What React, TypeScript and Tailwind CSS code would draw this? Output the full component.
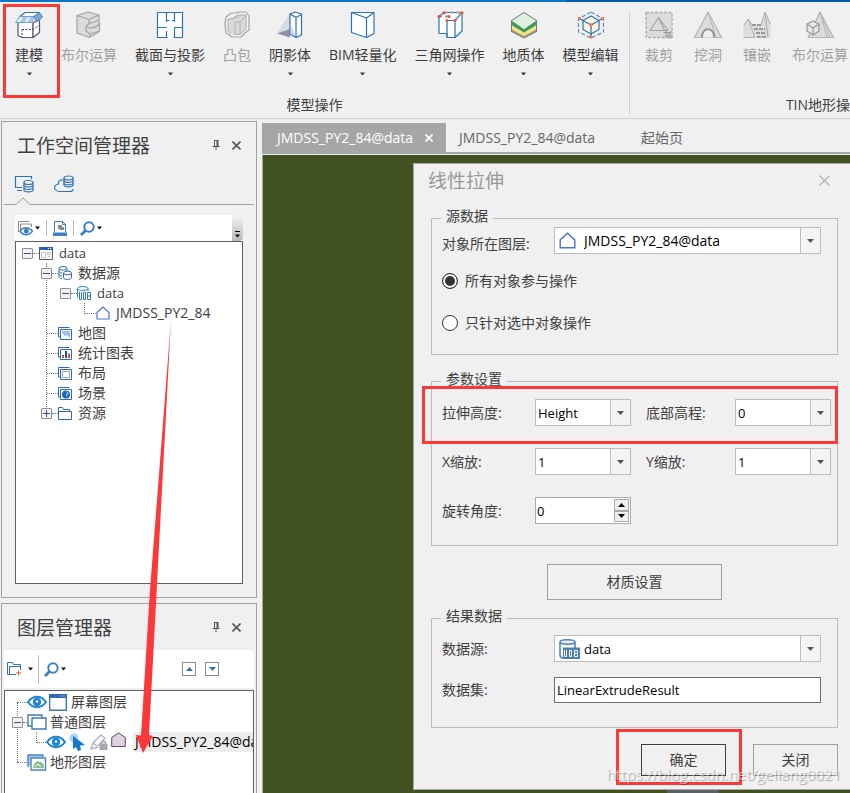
import type { ReactNode } from 'react';
import { clsx } from 'clsx';

const BLUE = '#2f73b5';
const GREY = '#a3a3a3';

/* ---------- Ribbon icons ---------- */

function Icon28({ children }: { children: ReactNode }) {
  return (
    <svg width="28" height="28" viewBox="0 0 28 28" fill="none" strokeLinejoin="round" aria-hidden="true">
      {children}
    </svg>
  );
}

const ModelIcon = () => (
  <Icon28>
    <path d="M3 11v13.500l4 2h11V12" fill="#fff" stroke="#555a6e" strokeWidth="1.200" />
    <path d="M18 26.500l6.500-5V8L18 12z" fill="#fff" stroke="#555a6e" strokeWidth="1.200" />
    <path d="M7 18.500h11l6-4M7 18.500v8" stroke="#3d4a66" strokeDasharray="2 1.500" />
    <path d="M10 1.500h14.500l-5 4H5z" fill="#fff" stroke="#2f6fae" strokeWidth="1.200" />
    <path d="M5 5.500h14l-2 6H.5z" fill="#e6f0fa" stroke="#6f9fd0" />
    <path d="M8 6h4l-2 5H5zM15 6h3l-1.500 5H13z" fill="#a9c8ea" />
    <path d="M24.500 1.500l3 4.500-5.500 5-3-5.500z" fill="#7fa7d6" stroke="#4d84bd" />
  </Icon28>
);

const BooleanIcon = () => (
  <Icon28>
    <path d="M2 4.500L13 1l11 3v5.500l.5 3v8l-10 6L2 22z" fill="#dcdcdc" stroke={GREY} strokeWidth="1.200" />
    <path d="M2 4.500l12 4L24 4M14 8.500v4M14.500 12.500L23 9.500M11 15c2 3 9 3 13.500-2.500M11 15l3.500-2.500M11 15v5l4 3 9.500-3M15 23v3" stroke={GREY} strokeWidth="1.200" />
  </Icon28>
);

const SectionIcon = () => (
  <Icon28>
    <path d="M1.500 1.500h25v25h-25z" fill="#fff" stroke={BLUE} strokeWidth="1.200" />
    <path d="M10.500 2v9M18.500 2v9M10.500 9.500h3M16 9.500h2.500M2 16.500h8.500M10.500 20v6M18.500 16.500v10M18.500 16.500h8" stroke={BLUE} strokeWidth="1.200" />
    <path d="M11.500 26.500h6" stroke="#fff" strokeWidth="2" />
  </Icon28>
);

const HullIcon = () => (
  <Icon28>
    <path d="M3 6l5-4h5l3-1h7l3 4v14l-4 3-4 4H9l-6-4-1-9z" fill="#f2f2f2" stroke={GREY} strokeWidth="1.200" />
    <path d="M5 8l6-3 12-2v15l-7 6H9l-4-3z" fill="#d9d9d9" />
    <path d="M5 8h5l4-4h9v14l-6 5.500V11h-5v12.500h5M5 8v12.500l3 2.500M17 11l6-6M10 8l6-3" stroke="#b0b0b0" />
  </Icon28>
);

const ShadowIcon = () => (
  <Icon28>
    <path d="M14 2L1 22.500h13z" fill="#d6dae2" />
    <path d="M1 22.500L14 18v8.500z" fill="#8d93a3" />
    <path d="M14 3l5-2 6.500 2v21L20 26.500 14 23z" fill="#fff" stroke="#2f6fae" strokeWidth="1.200" />
    <path d="M14 3l6 3.500 5.500-3M20 6.500v20" stroke="#2f6fae" strokeWidth="1.200" />
    <path d="M14.600 13l5 12.500-5-3z" fill="#c9d9ee" />
  </Icon28>
);

const BimIcon = () => (
  <Icon28>
    <path d="M2.500 1.500h22.500v21L17.500 26.500l-15-5z" fill="#fff" stroke={BLUE} strokeWidth="1.200" />
    <path d="M2.500 1.500l15 5.500L25 1.500M17.500 7v19.500" stroke={BLUE} strokeWidth="1.200" />
  </Icon28>
);

const MeshIcon = () => (
  <Icon28>
    <path d="M3 5.500v17h8v4h8l7-6.500V1.500H8z" fill="#fff" stroke={BLUE} strokeWidth="1.200" />
    <path d="M11 26V9.500h8v17M19 9.500l7-8" stroke={BLUE} strokeWidth="1.200" />
    <path d="M8 1.500h18l-7 8M3 5.500h10" stroke="#9aa0a8" strokeWidth="2" strokeDasharray="3 3" />
    <g fill="#e2593a">
      <circle cx="8" cy="1.800" r="1.600" />
      <circle cx="26" cy="1.800" r="1.600" />
      <circle cx="3" cy="5.500" r="1.600" />
      <circle cx="13" cy="5.500" r="1.600" />
      <circle cx="11" cy="9.500" r="1.600" />
      <circle cx="19" cy="9.500" r="1.600" />
    </g>
  </Icon28>
);

const GeologyIcon = () => (
  <Icon28>
    <path d="M1.500 17v3.500L14 27l12.500-6.500V17L14 24z" fill="#b0a070" />
    <path d="M1.500 13.500V18L14 25l12.500-7v-4.500L14 20z" fill="#f2e487" />
    <path d="M1.500 9.500V14L14 21.500 26.500 14V9.500L14 18z" fill="#3f9b5c" />
    <path d="M14 1.500l12.500 8L14 18 1.500 9.500z" fill="#dff0df" />
    <path d="M14 1.500l12.500 8v11L14 27 1.500 20.500v-11z" stroke="#6b7a80" />
  </Icon28>
);

const EditIcon = () => (
  <Icon28>
    <path d="M14 1l12.500 7v13L14 27 1.500 21V8z" stroke="#5b8dc0" strokeDasharray="4 2" strokeWidth="1.200" />
    <path d="M14 5l8 4.500v9L14 23l-8-4.500v-9z" fill="#faf5dc" stroke={BLUE} strokeWidth="1.200" />
    <path d="M2.500 7.500L14 14l11.500-6.500M14 14v12" stroke={BLUE} strokeWidth="1.200" />
    <path d="M1.500 6.500h2v2h-2zM24.500 6.500h2v2h-2zM13 13h2v2h-2zM13 25h2v2h-2z" fill="#fff" stroke="#e2593a" />
  </Icon28>
);

const ClipIcon = () => (
  <Icon28>
    <path d="M1 1.500h26v25H1z" fill="#dcdcdc" stroke="#adadad" strokeWidth="1.300" strokeDasharray="3 1.500" />
    <path d="M13.500 6.500L5 19.500h18zM13.500 6.500l6 13" stroke={GREY} strokeWidth="1.200" />
    <path d="M21 19v6h7M18.500 21.500h6.500V28M20 26.500l7-7" stroke="#999" />
  </Icon28>
);

const DigIcon = () => (
  <Icon28>
    <path d="M14 1L.5 26.500h27z" fill="#dcdcdc" stroke="#b4b4b4" strokeWidth="1.200" />
    <path d="M14 1l8 25.500" stroke="#b4b4b4" />
    <path d="M8 26.500c-1-11 13-11 12 0" stroke="#979797" strokeWidth="2" fill="#efefef" />
  </Icon28>
);

const InlayIcon = () => (
  <Icon28>
    <path d="M.5 26.500V15L5 8l4.500 6H18l4-13 5.500 13v12.500z" fill="#dcdcdc" />
    <path d="M.5 15L5 8l7 18.500M5 8l4.500 6M18 14l4-13 5.500 12M22 1l3 25.500M.5 26.500h11" stroke="#adadad" />
    <path d="M9 14h10M11 18h11M13 22h10M14 26h10" stroke="#9a9a9a" strokeWidth="2" strokeDasharray="4 1" />
  </Icon28>
);

const TinBooleanIcon = () => (
  <Icon28>
    <path d="M14 1L2 26.500h25.500z" fill="#dcdcdc" stroke="#b4b4b4" strokeWidth="1.200" />
    <path d="M14 1l7 25.500M14 1l10 25.500" stroke="#b4b4b4" />
    <path d="M7 10l6 3v7l-6 4-6-4v-7z" fill="#e6e6e6" stroke="#979797" strokeWidth="1.200" />
    <path d="M1 13l6 4 6-4M7 17v7" stroke="#979797" strokeWidth="1.200" />
  </Icon28>
);

/* ---------- Small icons ---------- */

function Caret({ className }: { className?: string }) {
  return (
    <svg className={className} width="7" height="4" viewBox="0 0 7 4" fill="currentColor" aria-hidden="true">
      <path d="M0 0h7L3.500 4z" />
    </svg>
  );
}

const PinIcon = () => (
  <svg width="8" height="10" viewBox="0 0 8 10" fill="none" stroke="#555" aria-hidden="true">
    <path d="M2.500 0v6M2 .5h4M.5 6.500h7M4 7v3" />
    <path d="M5.500 0v6" strokeWidth="2" />
  </svg>
);

const CloseIcon = ({ size = 9, width = 1.6 }: { size?: number; width?: number }) => (
  <svg width={size} height={size} viewBox="0 0 9 9" stroke="currentColor" strokeWidth={width} aria-hidden="true">
    <path d="M.5.5l8 8M8.500.5l-8 8" />
  </svg>
);

const SearchIcon = () => (
  <svg width="15" height="15" viewBox="0 0 15 15" fill="none" stroke="#3f7fc0" aria-hidden="true">
    <circle cx="9" cy="6" r="4.700" strokeWidth="2" />
    <path d="M5.500 9.500L1 14" strokeWidth="2.800" />
  </svg>
);

const EyeIcon = () => (
  <svg className="shrink-0" width="20" height="14" viewBox="0 0 20 14" aria-hidden="true">
    <path d="M1 7c5-7 13-7 18 0-5 7-13 7-18 0z" fill="#fff" stroke="#1b82d1" strokeWidth="2" />
    <circle cx="10" cy="7" r="4.200" fill="#1b82d1" />
    <circle cx="10" cy="6.500" r="1.300" fill="#fff" />
  </svg>
);

const LocalTabIcon = () => (
  <svg width="20" height="18" viewBox="0 0 20 18" fill="none" stroke={BLUE} strokeWidth="1.200" aria-hidden="true">
    <path d="M8 12.500H1.500v-11h16V4M3 15.500h5" />
    <path d="M10 7.500v7.500c0 2.500 9 2.500 9 0V7.500" fill="#f0f0f0" />
    <ellipse cx="14.500" cy="7.500" rx="4.500" ry="2" fill="#f0f0f0" />
    <path d="M10 10c0 2.500 9 2.500 9 0M10 12.500c0 2.500 9 2.500 9 0" />
  </svg>
);

const CloudTabIcon = () => (
  <svg width="20" height="18" viewBox="0 0 20 18" fill="none" stroke={BLUE} strokeWidth="1.200" aria-hidden="true">
    <path d="M9 5C6 4 4 7 4.500 9 1 9.500 0 12 1 14c1 1.500 2 2.500 4 2.500h11c2 0 3-1 3-2.500" />
    <path d="M10 3v7c0 2.500 9 2.500 9 0V3" fill="#f0f0f0" />
    <ellipse cx="14.500" cy="3" rx="4.500" ry="2" fill="#f0f0f0" />
    <path d="M10 5.500C10 8 19 8 19 5.500M10 8c0 2.500 9 2.500 9 0" />
  </svg>
);

const LayersEyeIcon = () => (
  <svg width="15" height="15" viewBox="0 0 15 15" fill="none" aria-hidden="true">
    <path d="M.5 11V.5h11M2.500 9V3h11v3" stroke="#8a8a8a" />
    <path d="M2 10c3-4.500 9-4.500 12.500 0-3.500 5-9.500 5-12.500 0z" fill="#fff" stroke="#3f7fc0" strokeWidth="1.500" />
    <circle cx="8.300" cy="10" r="2.500" fill="#3f7fc0" />
  </svg>
);

const StyleIcon = () => (
  <svg width="14" height="15" viewBox="0 0 14 15" fill="none" aria-hidden="true">
    <path d="M1.500 11V.5h8l3 3V11M9.500.5v3h3" stroke="#3f7fc0" />
    <path d="M5 4h4v2h2v3H7V8H5z" fill="#888" />
    <path d="M0 11.500h14V15H0z" fill="#3f7fc0" />
  </svg>
);

const WindowIcon = () => (
  <svg width="14" height="13" viewBox="0 0 14 13" fill="none" aria-hidden="true">
    <path d="M.5.5h13v12H.5z" fill="#fff" stroke="#4b5a78" />
    <path d="M0 0h14v3H0z" fill="#2f5fc8" />
    <path d="M9 1.500h1M11 1.500h1" stroke="#fff" />
    <path d="M2.500 5.500h4v5h-4zM8.500 5.500h3v2h-3zM8.500 9.500h3" stroke="#c3c3c3" />
  </svg>
);

const SourcesIcon = () => (
  <svg width="14" height="14" viewBox="0 0 14 14" fill="none" stroke="#3172bd" aria-hidden="true">
    <path d="M1 2.500v8c0 1 1 2 3 2M1 5c0 1 1 2 3 2M1 8c0 1 1 2 3 2M9 2.500V5" />
    <ellipse cx="5" cy="2.300" rx="4" ry="1.800" />
    <path d="M5.500 7v4.500c0 2.500 8 2.500 8 0V7" fill="#fff" stroke="#2f5fd0" />
    <ellipse cx="9.500" cy="7" rx="4" ry="1.800" fill="#fff" stroke="#2f5fd0" />
  </svg>
);

const UdbIcon = () => (
  <svg width="14" height="15" viewBox="0 0 14 15" fill="none" stroke="#2b7fc0" aria-hidden="true">
    <path d="M.5 2.500v9M11 2.500V5" />
    <ellipse cx="5.700" cy="2.500" rx="5.200" ry="2" />
    <path d="M2.500 6v7.500h2V6M6.500 6.500h2v7h-2zM10.500 6.500h3v7h-3zM10.500 10h3" />
  </svg>
);

const RegionIcon = ({ size = 14 }: { size?: number }) => (
  <svg className="shrink-0" width={size} height={size} viewBox="0 0 14 14" fill="none" aria-hidden="true">
    <path d="M1 6.500L7 1l6 5.500V13H1z" fill="#fff" stroke="#4a78d2" strokeWidth="1.200" />
  </svg>
);

function StackIcon({ children }: { children?: ReactNode }) {
  return (
    <svg width="14" height="13" viewBox="0 0 14 13" fill="none" aria-hidden="true">
      <path d="M.5 10V.5h11M.5 10h2" stroke="#2f68c0" />
      <path d="M2.500 2.500h11v10h-11z" fill="#fff" stroke="#2f68c0" />
      {children}
    </svg>
  );
}

const FolderIcon = () => (
  <svg width="14" height="13" viewBox="0 0 14 13" fill="none" stroke="#2f68c0" aria-hidden="true">
    <path d="M.5 12.500V.5h4l1 2h6v2M.5 12.500h13v-8h-13" />
  </svg>
);

const BigUdbIcon = () => (
  <svg width="21" height="20" viewBox="0 0 21 20" fill="none" stroke="#4b7fb5" strokeWidth="1.500" aria-hidden="true">
    <path d="M1 3v13c0 2 1 3 3 3M16 3v6" />
    <ellipse cx="8.500" cy="3" rx="7.500" ry="2.200" fill="#e4eef8" />
    <path d="M4 8.500h17V20H4z" fill="#4b7fb5" stroke="none" />
    <path d="M5.500 11v6.500h2V11M10.500 11.500h2v6h-2zM15.500 11.500h3v6h-3zM15.500 14.500h3" stroke="#fff" strokeWidth="1" />
  </svg>
);

/* ---------- Ribbon ---------- */

type Tool = { label: string; icon: ReactNode; menu?: boolean; disabled?: boolean };

const modelTools: Tool[] = [
  { label: '建模', icon: <ModelIcon />, menu: true },
  { label: '布尔运算', icon: <BooleanIcon />, disabled: true },
  { label: '截面与投影', icon: <SectionIcon />, menu: true },
  { label: '凸包', icon: <HullIcon />, disabled: true },
  { label: '阴影体', icon: <ShadowIcon />, menu: true },
  { label: 'BIM轻量化', icon: <BimIcon />, menu: true },
  { label: '三角网操作', icon: <MeshIcon />, menu: true },
  { label: '地质体', icon: <GeologyIcon />, menu: true },
  { label: '模型编辑', icon: <EditIcon />, menu: true },
];

const tinTools: Tool[] = [
  { label: '裁剪', icon: <ClipIcon />, disabled: true },
  { label: '挖洞', icon: <DigIcon />, disabled: true },
  { label: '镶嵌', icon: <InlayIcon />, disabled: true },
  { label: '布尔运算', icon: <TinBooleanIcon />, disabled: true },
];

function ToolButton({ tool }: { tool: Tool }) {
  return (
    <button
      type="button"
      disabled={tool.disabled}
      className={clsx('flex shrink-0 flex-col items-center whitespace-nowrap', tool.disabled ? 'text-[#a0a0a0]' : 'text-[#3c3c3c]')}
    >
      {tool.icon}
      <span className="mt-[6px] leading-5">{tool.label}</span>
      <span className="mt-[7px] h-1">{tool.menu && <Caret className="w-[5px] text-[#333]" />}</span>
    </button>
  );
}

function Ribbon() {
  return (
    <header className="border-b border-[#d0d0d0]">
      <div className="flex h-[2px]">
        <div className="w-[567px] bg-[#0a74c8]" />
        <div className="flex-1 bg-[#00599f]" />
      </div>
      <div className="flex h-[116px] overflow-hidden pt-[9px]">
        <section className="flex w-[629px] shrink-0 flex-col">
          <div className="flex gap-[18px] pl-[15px]">
            {modelTools.map(t => <ToolButton key={t.label} tool={t} />)}
          </div>
          <h2 className="mt-[19px] text-center leading-5">模型操作</h2>
        </section>
        <div className="h-[103px] w-px shrink-0 bg-[#cfcfcf]" />
        <section className="flex w-[390px] shrink-0 flex-col">
          <div className="flex gap-[21px] pl-[15px]">
            {tinTools.map(t => <ToolButton key={t.label} tool={t} />)}
          </div>
          <h2 className="mt-[19px] text-center leading-5">TIN地形操作</h2>
        </section>
      </div>
    </header>
  );
}

/* ---------- Docked panels ---------- */

function PanelTitle({ children }: { children: ReactNode }) {
  return (
    <div className="flex h-[46px] shrink-0 items-center px-[15px]">
      <h2 className="flex-1 pt-[2px] text-[19px]">{children}</h2>
      <button type="button" aria-label="固定" className="mr-3"><PinIcon /></button>
      <button type="button" aria-label="关闭" className="text-[#555]"><CloseIcon /></button>
    </div>
  );
}

function Expander({ open }: { open: boolean }) {
  return (
    <button type="button" aria-label={open ? '折叠' : '展开'} className="z-10 flex size-[11px] shrink-0 items-center justify-center rounded-[1px] border border-[#909090] bg-[#f4f4f4]">
      <svg width="7" height="7" viewBox="0 0 7 7" stroke="#34508f" aria-hidden="true">
        <path d={open ? 'M0 3.500h7' : 'M0 3.500h7M3.500 0v7'} />
      </svg>
    </button>
  );
}

const Dots = ({ className }: { className: string }) => (
  <span className={clsx('shrink-0 border-t border-dotted border-[#777]', className)} />
);

function TreeRow({ className, children }: { className?: string; children: ReactNode }) {
  return <li className={clsx('flex h-5 items-center whitespace-nowrap', className)}>{children}</li>;
}

const leafNodes = [
  {
    label: '地图',
    icon: <StackIcon><path d="M4 4h8v7L9 8 7 9 4 6z" fill="#9cc0ea" /></StackIcon>,
  },
  {
    label: '统计图表',
    icon: <StackIcon><path d="M5 8v3M11 6.500V11" stroke="#c05a2a" strokeWidth="2" /><path d="M8 4v7" stroke="#1d4f9c" strokeWidth="2" /></StackIcon>,
  },
  {
    label: '布局',
    icon: <StackIcon><path d="M4.500 4.500h7v6h-7z" stroke="#555" strokeDasharray="1 1" /></StackIcon>,
  },
  {
    label: '场景',
    icon: <StackIcon><circle cx="8" cy="7.500" r="4" fill="#1c64b4" /><path d="M8 4.500l2.500 2-2 1 .5 2" stroke="#bfe0f5" /></StackIcon>,
  },
];

function WorkspacePanel() {
  return (
    <section className="flex h-[477px] shrink-0 flex-col border border-[#a0a0a0]">
      <PanelTitle>工作空间管理器</PanelTitle>
      <div className="flex gap-5 pt-[7px] pl-3">
        <button type="button" aria-label="本地"><LocalTabIcon /></button>
        <button type="button" aria-label="云端"><CloudTabIcon /></button>
      </div>
      <div className="mx-[2px] mt-1 flex items-end">
        <span className="w-3 border-b border-[#a0a0a0]" />
        <svg width="14" height="8" viewBox="0 0 14 8" fill="none" stroke="#a0a0a0" aria-hidden="true">
          <path d="M0 7.500L7 1l7 6.500" />
        </svg>
        <span className="flex-1 border-b border-[#a0a0a0]" />
      </div>
      <div className="mx-[13px] mt-[10px] flex h-[26px] items-center rounded-t-sm bg-white pl-[3px]">
        <button type="button" aria-label="显示" className="flex items-center gap-[2px]"><LayersEyeIcon /><Caret className="w-[5px] text-black" /></button>
        <span className="mx-[6px] h-4 w-px bg-[#b8b8b8]" />
        <button type="button" aria-label="样式"><StyleIcon /></button>
        <span className="mx-[6px] h-4 w-px bg-[#b8b8b8]" />
        <button type="button" aria-label="搜索" className="flex items-center gap-[2px]"><SearchIcon /><Caret className="w-[5px] text-black" /></button>
        <button type="button" aria-label="更多" className="mt-auto ml-auto flex h-full w-[11px] flex-col items-center justify-end gap-[2px] rounded-r-sm bg-linear-to-b from-[#f4f4f4] to-[#b9b9b9] pb-[3px]">
          <span className="h-px w-[5px] bg-black" />
          <Caret className="w-[5px] text-black" />
        </button>
      </div>
      <ul className="mx-[13px] mb-[13px] flex-1 border border-[#5f5f5f] bg-white pt-[1px]">
        <TreeRow className="pl-[6px]">
          <Expander open />
          <Dots className="w-[6px]" />
          <WindowIcon />
          <span className="ml-[6px] text-[13px]">data</span>
        </TreeRow>
        {/* one guide line ties the second-level nodes together */}
        <li className="relative">
          <span className="absolute top-0 left-[30px] h-[150px] border-l border-dotted border-[#777]" />
          <ul>
            <TreeRow className="pl-[25px]">
              <Expander open />
              <Dots className="w-[6px]" />
              <SourcesIcon />
              <span className="ml-[6px]">数据源</span>
            </TreeRow>
            <TreeRow className="pl-[44px]">
              <Expander open />
              <Dots className="w-[6px]" />
              <UdbIcon />
              <span className="ml-[6px] text-[13px]">data</span>
            </TreeRow>
            <TreeRow className="pl-[68px]">
              <span className="h-[11px] w-[12px] self-start border-b border-l border-dotted border-[#777]" />
              <RegionIcon />
              <span className="ml-[6px]">JMDSS_PY2_84</span>
            </TreeRow>
            {leafNodes.map(n => (
              <TreeRow key={n.label} className="pl-[31px]">
                <Dots className="w-[11px]" />
                {n.icon}
                <span className="ml-[6px]">{n.label}</span>
              </TreeRow>
            ))}
            <TreeRow className="pl-[25px]">
              <Expander open={false} />
              <Dots className="w-[6px]" />
              <FolderIcon />
              <span className="ml-[6px]">资源</span>
            </TreeRow>
          </ul>
        </li>
      </ul>
    </section>
  );
}

function LayerPanel() {
  return (
    <section className="mt-[5px] flex min-h-0 flex-1 flex-col overflow-hidden border border-b-0 border-[#a0a0a0]">
      <PanelTitle>图层管理器</PanelTitle>
      <div className="mx-[2px] flex h-[38px] shrink-0 items-center rounded-t-sm bg-white pr-[35px] pl-[3px]">
        <button type="button" aria-label="新建图层组" className="flex items-center gap-[6px]">
          <svg width="15" height="14" viewBox="0 0 15 14" fill="none" stroke="#3172bd" aria-hidden="true">
            <path d="M9 12.500H.5V.5h5l1 2h7V8M2.500 12V4.500h11" />
            <path d="M11.500 8.500v5M9 11h5" stroke="#e2593a" />
          </svg>
          <Caret className="w-[5px] text-black" />
        </button>
        <span className="mx-[5px] h-[29px] w-px bg-[#b8b8b8]" />
        <button type="button" aria-label="搜索" className="flex items-center gap-[2px]"><SearchIcon /><Caret className="w-[5px] text-black" /></button>
        <button type="button" aria-label="上移" className="ml-auto flex size-[14px] items-center justify-center border border-[#8c8c8c] text-[#2f73b5]">
          <Caret className="rotate-180" />
        </button>
        <button type="button" aria-label="下移" className="ml-[9px] flex size-[14px] items-center justify-center border border-[#8c8c8c] text-[#2f73b5]">
          <Caret />
        </button>
      </div>
      <ul className="relative mx-[2px] mt-[2px] flex-1 overflow-hidden border border-b-0 border-[#5f5f5f] bg-white pt-[1px]">
        <span className="absolute top-[11px] left-3 h-[60px] border-l border-dotted border-[#777]" />
        <TreeRow className="pl-3">
          <Dots className="w-[10px]" />
          <EyeIcon />
          <svg className="ml-[2px]" width="18" height="17" viewBox="0 0 18 17" fill="none" aria-hidden="true">
            <path d="M.7.7h16.600v15.600H.7z" fill="#fff" stroke="#3f78b8" strokeWidth="1.400" />
            <path d="M0 0h18v4H0z" fill="#2f6bb0" />
            <path d="M12 2h1M14.500 2h1" stroke="#fff" />
          </svg>
          <span className="ml-1">屏幕图层</span>
        </TreeRow>
        <TreeRow className="pl-[7px]">
          <Expander open />
          <Dots className="w-1" />
          <svg width="20" height="16" viewBox="0 0 20 16" fill="none" stroke="#3f78b8" strokeWidth="1.400" aria-hidden="true">
            <path d="M5 12H1V1h14v3M5 4h14v11H5z" />
          </svg>
          <span className="ml-[3px]">普通图层</span>
        </TreeRow>
        <TreeRow className="pl-[31px]">
          <span className="h-[11px] w-[10px] shrink-0 self-start border-b border-l border-dotted border-[#777]" />
          <EyeIcon />
          <svg className="ml-[3px] shrink-0" width="17" height="18" viewBox="0 0 17 18" aria-hidden="true">
            <circle cx="5" cy="5" r="4.500" fill="#a9d6f7" />
            <path d="M4 3l12 9-5 .5L12 17l-3 1-2-4-3 2z" fill="#1479c9" />
          </svg>
          <svg className="ml-[3px] shrink-0" width="20" height="17" viewBox="0 0 20 17" fill="none" stroke="#b5b8c0" strokeWidth="1.500" aria-hidden="true">
            <path d="M9 13l-7 2 2-6 8-8 4 3-7 8M4 9l4 3" />
            <path d="M10.500 9.500h8V16h-8z" fill="#a5a8b0" stroke="none" />
            <path d="M12.500 9.500c0-3 4-3 4 0" stroke="#a5a8b0" />
          </svg>
          <svg className="mb-[5px] ml-[2px] shrink-0" width="15" height="15" viewBox="0 0 15 15" aria-hidden="true">
            <path d="M.7 5.500l6.800-4.500 6.800 4.500v9H.7z" fill="#e0d0e4" stroke="#5a4a6a" />
          </svg>
          <span className="ml-[7px] bg-[#ededed] pl-[2px] leading-5 text-black">JMDSS_PY2_84@data</span>
        </TreeRow>
        <TreeRow className="pl-3">
          <Dots className="w-[10px]" />
          <svg width="20" height="17" viewBox="0 0 20 17" fill="none" stroke="#4b84c4" strokeWidth="1.400" aria-hidden="true">
            <path d="M1 13V1h15v2" fill="#a9c9ec" />
            <path d="M4 4h14.500v12H4z" fill="#fff" />
            <path d="M6 14c1-6 4-8 7-6 3 0 4 3 4 6z" fill="#8cc08a" stroke="none" />
            <path d="M8 13l3-3 3 3" stroke="#fff" strokeWidth="1" />
          </svg>
          <span className="ml-[3px]">地形图层</span>
        </TreeRow>
      </ul>
    </section>
  );
}

/* ---------- Dialog ---------- */

type ComboProps = { id: string; value: string; icon?: ReactNode; className?: string };

function Combo({ id, value, icon, className = 'text-[13px]' }: ComboProps) {
  return (
    <div className="relative h-[27px] w-full border border-[#bdbdbd] bg-white text-black">
      {icon && <span className="pointer-events-none absolute inset-y-0 left-1 flex items-center">{icon}</span>}
      <select
        id={id}
        defaultValue={value}
        className={clsx('h-full w-full appearance-none bg-transparent pr-5 outline-none', icon ? 'pl-[29px]' : 'pl-[2px]', className)}
      >
        <option>{value}</option>
      </select>
      <span className="pointer-events-none absolute inset-y-0 right-0 flex w-5 items-center justify-center border-l border-[#bdbdbd] bg-[#f4f4f4]">
        <Caret className="text-[#555]" />
      </span>
    </div>
  );
}

function Group({ title, className, children }: { title: string; className?: string; children: ReactNode }) {
  return (
    <fieldset className={clsx('border border-[#bcbcbc] pl-[10px]', className)}>
      <legend className="-ml-px px-[5px] pb-1 leading-[18px]">{title}</legend>
      {children}
    </fieldset>
  );
}

const radioClass =
  'size-4 appearance-none rounded-full border border-[#333] bg-white checked:bg-[#333] checked:shadow-[inset_0_0_0_2px_#fff]';

function ExtrudeDialog() {
  return (
    <form className="ml-[150px] mt-2 flex h-[627px] flex-col border border-r-0 border-[#a8a8a8] bg-[#f0f0f0] pr-3 pl-[17px]">
      <div className="-ml-[3px] flex h-8 items-center pr-1">
        <h2 className="flex-1 pt-[2px] text-[19px] text-[#999]">线性拉伸</h2>
        <button type="button" aria-label="关闭" className="mr-1 text-[#aaa]"><CloseIcon size={11} width={1} /></button>
      </div>

      <Group title="源数据" className="mt-[11px] pr-4 pb-[21px]">
        <div className="-mt-[2px] flex h-[27px] items-end">
          <label htmlFor="layer" className="w-28 shrink-0 leading-5">对象所在图层:</label>
          <Combo id="layer" value="JMDSS_PY2_84@data" icon={<RegionIcon size={17} />} className="text-[14px]" />
        </div>
        <label className="mt-[17px] flex h-5 items-center gap-[7px]">
          <input type="radio" name="scope" defaultChecked className={radioClass} />
          所有对象参与操作
        </label>
        <label className="mt-[22px] flex h-5 items-center gap-[7px]">
          <input type="radio" name="scope" className={radioClass} />
          只针对选中对象操作
        </label>
      </Group>

      <Group title="参数设置" className="mt-[15px] pr-[6px] pb-[21px]">
        <div className="grid grid-cols-[93px_1fr_104px_1fr] items-center gap-y-[22px] pt-[7px]">
          <label htmlFor="height">拉伸高度:</label>
          <Combo id="height" value="Height" />
          <label htmlFor="base" className="pl-[15px]">底部高程:</label>
          <Combo id="base" value="0" />
          <label htmlFor="scale-x">X缩放:</label>
          <Combo id="scale-x" value="1" />
          <label htmlFor="scale-y" className="pl-[15px]">Y缩放:</label>
          <Combo id="scale-y" value="1" />
          <label htmlFor="angle">旋转角度:</label>
          <div className="flex h-[27px] border border-[#ababab] bg-white p-[1px]">
            <input id="angle" type="text" defaultValue="0" className="w-full min-w-0 text-[13px] text-black outline-none" />
            <div className="flex w-[15px] shrink-0 flex-col text-black">
              <button type="button" aria-label="增加" className="flex flex-1 items-center justify-center border border-[#ababab] bg-[#f0f0f0]"><Caret className="rotate-180" /></button>
              <button type="button" aria-label="减少" className="flex flex-1 items-center justify-center border border-[#ababab] bg-[#f0f0f0]"><Caret /></button>
            </div>
          </div>
        </div>
      </Group>

      <button type="button" className="mx-auto mt-[18px] h-9 w-[175px] shrink-0 border border-[#a0a0a0]">材质设置</button>

      <Group title="结果数据" className="mt-[7px] pr-4 pb-6">
        <div className="mt-[6px] flex items-center">
          <label htmlFor="source" className="w-28 shrink-0">数据源:</label>
          <Combo id="source" value="data" icon={<BigUdbIcon />} />
        </div>
        <div className="mt-[15px] flex items-center">
          <label htmlFor="dataset" className="w-28 shrink-0">数据集:</label>
          <input id="dataset" type="text" defaultValue="LinearExtrudeResult" className="h-[26px] w-full border border-[#6e6e6e] bg-white px-[2px] text-[13px] text-black outline-none" />
        </div>
      </Group>

      <div className="mt-4 flex justify-end gap-[27px]">
        <button type="button" className="h-8 w-[85px] border border-[#404040]">确定</button>
        <button type="button" className="h-8 w-[85px] border border-[#a0a0a0]">关闭</button>
      </div>
    </form>
  );
}

function Workspace() {
  return (
    <main className="flex min-w-0 flex-1 flex-col pt-1">
      <nav className="flex h-[31px] shrink-0 border-b-2 border-[#a6a6a6] text-[#666]">
        <div className="flex w-[184px] items-center bg-[#a6a6a6] pr-[13px] pl-[15px] text-white">
          <a href="#scene-1" className="flex-1">JMDSS_PY2_84@data</a>
          <button type="button" aria-label="关闭标签"><CloseIcon size={8} width={2} /></button>
        </div>
        <a href="#scene-2" className="flex w-[195px] items-center pl-[13px]">JMDSS_PY2_84@data</a>
        <a href="#start" className="flex items-center">起始页</a>
      </nav>
      <div className="mt-px min-h-0 flex-1 overflow-hidden border-l border-[#a6a6a6] bg-[#415220]">
        <ExtrudeDialog />
        <div className="ml-[404px] h-[3px] w-[52px] bg-[#5a6068]" />
      </div>
    </main>
  );
}

export default function App() {
  return (
    <div className="relative flex h-screen flex-col overflow-hidden bg-[#f0f0f0] font-['Open_Sans','Noto_Sans_CJK_SC',sans-serif] text-[14px] leading-5 text-[#404040]">
      <Ribbon />
      <div className="flex min-h-0 flex-1">
        <aside className="mr-[5px] ml-px flex w-64 shrink-0 flex-col pt-[2px]">
          <WorkspacePanel />
          <LayerPanel />
        </aside>
        <Workspace />
      </div>

      {/* walkthrough marks drawn over the window */}
      <div className="pointer-events-none absolute top-1 left-[3px] h-[94px] w-[57px] border-3 border-[#fd3838]" />
      <div className="pointer-events-none absolute top-[386px] left-[422px] h-[58px] w-[416px] border-3 border-[#fd3838]" />
      <div className="pointer-events-none absolute top-[729px] left-[616px] h-[56px] w-[126px] border-3 border-[#fd3838]" />
      <svg className="pointer-events-none absolute top-[320px] left-[130px]" width="50" height="435" viewBox="0 0 50 435" aria-hidden="true">
        <path d="M41 0L19 415l4 1-10 17-7-18 5 .5L20 270z" fill="#fd3838" />
      </svg>
      <span className="pointer-events-none absolute right-[9px] bottom-[7px] text-[15px] leading-6 text-white/60 [text-shadow:1px_1px_1px_rgb(0_0_0/0.3)]">
        https://blog.csdn.net/geliang0021
      </span>
    </div>
  );
}
